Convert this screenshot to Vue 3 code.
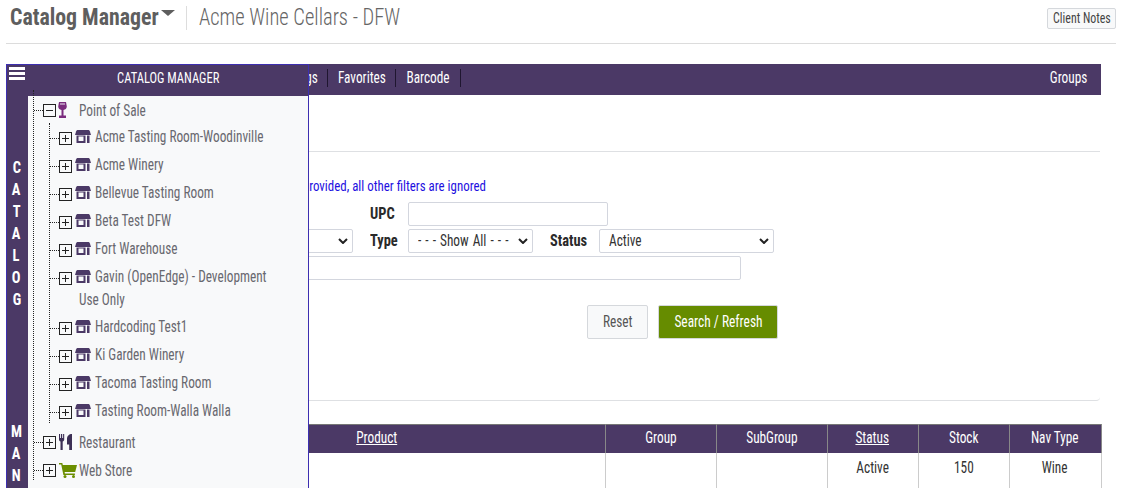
<script setup>
const stores = [
  { name: 'Acme Tasting Room-Woodinville' },
  { name: 'Acme Winery' },
  { name: 'Bellevue Tasting Room' },
  { name: 'Beta Test DFW' },
  { name: 'Fort Warehouse' },
  { name: 'Gavin (OpenEdge) - Development', more: 'Use Only' },
  { name: 'Hardcoding Test1' },
  { name: 'Ki Garden Winery' },
  { name: 'Tacoma Tasting Room' },
  { name: 'Tasting Room-Walla Walla' },
]
const rail = ['C', 'A', 'T', 'A', 'L', 'O', 'G', '', '', '', '', '', 'M', 'A', 'N']
</script>

<template>
  <div class="page">
    <header class="top">
      <div class="brand"><span class="n">Catalog Manager</span></div>
      <span class="caret"></span>
      <div class="client"><span class="n">Acme Wine Cellars - DFW</span></div>
      <button class="notes"><span class="n">Client Notes</span></button>
    </header>

    <nav class="nav">
      <div class="nav-left">
        <a><span class="n">Listings</span></a>
        <a><span class="n">Favorites</span></a>
        <a><span class="n">Barcode</span></a>
      </div>
      <a class="groups"><span class="n">Groups</span></a>
    </nav>

    <main class="content">
      <section class="filters">
        <p class="hint"><span class="n">If a UPC is provided, all other filters are ignored</span></p>
        <div class="form">
          <div class="f-row r1"><label><span class="n">UPC</span></label><input class="upc" /></div>
          <div class="f-row r2">
            <div class="select s0"><span class="n"></span><svg viewBox="0 0 10 6"><path d="M1 1l4 4 4-4" /></svg></div>
            <label><span class="n">Type</span></label>
            <div class="select s1"><span class="n spaced">- - - Show All - - -</span><svg viewBox="0 0 10 6"><path d="M1 1l4 4 4-4" /></svg></div>
            <label class="ls"><span class="n">Status</span></label>
            <div class="select s2"><span class="n">Active</span><svg viewBox="0 0 10 6"><path d="M1 1l4 4 4-4" /></svg></div>
          </div>
          <div class="f-row r3"><input class="wide" /></div>
        </div>
        <div class="actions">
          <button class="reset"><span class="n">Reset</span></button>
          <button class="search"><span class="n">Search / Refresh</span></button>
        </div>
      </section>

      <table class="grid">
        <colgroup>
          <col class="c0" /><col class="c1" /><col class="c2" /><col class="c2" /><col class="c3" /><col class="c3" /><col class="c4" />
        </colgroup>
        <thead>
          <tr>
            <th></th>
            <th><u class="n">Product</u></th>
            <th><span class="n">Group</span></th>
            <th><span class="n">SubGroup</span></th>
            <th><u class="n">Status</u></th>
            <th><span class="n">Stock</span></th>
            <th><span class="n">Nav Type</span></th>
          </tr>
        </thead>
        <tbody>
          <tr>
            <td></td><td></td><td></td><td></td>
            <td><span class="n">Active</span></td>
            <td><span class="n">150</span></td>
            <td><span class="n">Wine</span></td>
          </tr>
        </tbody>
      </table>
    </main>

    <aside class="side">
      <div class="rail">
        <span class="burger"><i></i><i></i><i></i></span>
        <div class="letters"><b v-for="(l, i) in rail" :key="i"><span class="n">{{ l }}</span></b></div>
      </div>
      <div class="panel">
        <div class="p-head"><span class="n">CATALOG MANAGER</span></div>
        <ul class="tree">
          <li class="root">
            <div class="line">
              <span class="box minus"></span>
              <svg class="ic wine" viewBox="0 0 9 16"><path fill="#7b2d7e" d="M1 0h7l.8 4.500c0 2-1.500 3.200-3.300 3.500v5.500h2.500V16H1v-2.500h2.500V8C1.700 7.700.2 6.500.2 4.500z" /><rect x="2" y="1" width="5" height="2" fill="#b48ab8" /></svg>
              <span class="txt"><span class="n">Point of Sale</span></span>
            </div>
            <ul class="sub">
              <li v-for="s in stores" :key="s.name" class="store">
                <div class="line">
                  <span class="box plus"></span>
                  <svg class="ic shop" viewBox="0 0 16 13"><path fill="#4b3966" d="M3 0h10c1 0 1.500.5 1.800 1.200L16 5H0l1.200-3.800C1.500.5 2 0 3 0z" /><path fill="#4b3966" fill-rule="evenodd" d="M1.500 5.500H10.500V13H1.500zM3.500 6.500v4.500h5V6.500z" /><rect x="12" y="5.500" width="2.500" height="7.500" fill="#4b3966" /></svg>
                  <span class="txt"><span class="n">{{ s.name }}</span></span>
                </div>
                <div v-if="s.more" class="more"><span class="txt"><span class="n">{{ s.more }}</span></span></div>
              </li>
            </ul>
          </li>
          <li class="root">
            <div class="line">
              <span class="box plus"></span>
              <svg class="ic fork" viewBox="0 0 13 16"><path fill="#3c2f55" d="M0 0h1.100v4h.9V0h1.200v4h.9V0h1.100v5.500c0 1-.7 1.700-1.500 2V16H1.500V7.500C.7 7.200 0 6.500 0 5.500zM13 0v16h-2.800v-5.500H8V5C8 2 10 0 13 0z" /></svg>
              <span class="txt"><span class="n">Restaurant</span></span>
            </div>
          </li>
          <li class="root">
            <div class="line">
              <span class="box plus"></span>
              <svg class="ic cart" viewBox="0 0 18 15"><path fill="#6b8e00" d="M0 0h3.300l.5 2H18l-1.800 7H5.600l.3 1.500h10V12H4.400L2.200 1.600H0z" /><circle cx="6" cy="13.500" r="1.500" fill="#6b8e00" /><circle cx="14.500" cy="13.500" r="1.500" fill="#6b8e00" /></svg>
              <span class="txt"><span class="n">Web Store</span></span>
            </div>
          </li>
        </ul>
      </div>
    </aside>
  </div>
</template>

<style>
html, body { margin: 0; height: 100%; overflow: hidden; background: #fff; }
</style>

<style scoped>
.page {
  position: relative;
  width: 1122px;
  height: 488px;
  overflow: hidden;
  box-sizing: border-box;
  padding: 0 6px;
  font-family: Roboto, "Liberation Sans", sans-serif;
  font-stretch: 75%;
  font-size: 16px;
  color: #3f3f46;
}
.n {
  display: inline-block;
  transform: scaleX(.83);
  white-space: nowrap;
}
.top {
  display: flex;
  align-items: flex-start;
  height: 43px;
  border-bottom: 1px solid #dcdcdc;
  padding-left: 4px;
}
.brand {
  width: 151px;
  font-size: 24px;
  font-weight: 700;
  color: #5e5e5e;
  line-height: 24px;
  margin-top: 5px;
}
.brand .n { transform: scaleX(.91); transform-origin: left center; }
.caret {
  width: 0; height: 0;
  border: 7px solid transparent;
  border-top: 6px solid #5e5e5e;
  border-bottom: 0;
  margin-top: 10px;
  flex: none;
}
.client {
  margin: 6px 0 0 11px;
  padding-left: 12px;
  border-left: 1px solid #ddd;
  height: 24px;
  font-size: 24px;
  line-height: 22px;
  color: #666;
  font-weight: 300;
}
.client .n { transform: scaleX(.855); transform-origin: left center; }
.notes {
  margin: 8px 0 0 auto;
  width: 69px;
  height: 21px;
  font: inherit;
  font-size: 14px;
  line-height: 17px;
  padding: 0;
  color: #444;
  background: #f8f9fa;
  border: 1px solid #d5d8dc;
  border-radius: 2px;
}
.notes .n { transform: scaleX(.85); }
.nav {
  margin-top: 20px;
  margin-right: 15px;
  height: 31px;
  background: #4b3966;
  color: #fff;
  display: flex;
  justify-content: space-between;
  align-items: center;
  line-height: 18px;
  padding-bottom: 3px;
  box-sizing: border-box;
}
.nav-left { display: flex; padding-left: 251px; }
.nav-left a {
  text-align: center;
  border-right: 1px solid #1f1630;
  height: 18px;
}
.nav-left a:nth-child(1) { width: 61px; padding-right: 9px; text-align: right; }
.nav-left a:nth-child(1) .n { transform-origin: right center; }
.nav-left a:nth-child(2) { width: 67px; }
.nav-left a:nth-child(3) { width: 64px; }
.groups { padding-right: 10px; }
.content { margin-right: 15px; }
.filters {
  margin-top: 56px;
  border-top: 1px solid #dee0e3;
  border-bottom: 1px solid #dee0e3;
  border-bottom-right-radius: 4px;
  height: 250px;
  margin-right: 1px;
  box-sizing: border-box;
}
.hint {
  margin: 0;
  width: 480px;
  text-align: right;
  color: #1d10e0;
  padding-top: 26px;
  line-height: 17px;
  font-size: 15px;
}
.hint .n { transform: scaleX(.86); transform-origin: right center; }
.form { margin-top: 7px; }
.f-row { display: flex; align-items: flex-start; height: 27px; }
label {
  font-weight: 700;
  color: #2a2a2a;
  line-height: 24px;
}
label .n { transform: scaleX(.9); transform-origin: left center; }
input, .select {
  box-sizing: border-box;
  height: 24px;
  border: 1px solid #d3d6de;
  border-radius: 2px;
  background: #fff;
  flex: none;
}
.select {
  display: flex;
  align-items: center;
  justify-content: space-between;
  padding: 0 4px 0 9px;
  color: #333;
}
.select .n { transform-origin: left center; margin-top: -2px; }
.select .n.spaced { word-spacing: 1.200px; width: 90px; }
.select svg {
  width: 10px;
  height: 6px;
  fill: none;
  stroke: #222;
  stroke-width: 2;
  flex: none;
}
.r1 { padding-left: 364px; }
.r1 label { width: 38px; }
.upc { width: 200px; }
.r2 { padding-left: 200px; }
.s0 { width: 147px; margin-right: 17px; }
.r2 label { width: 38px; }
.r2 label.ls { width: 49px; margin-left: 17px; }
.s1 { width: 125px; }
.s2 { width: 175px; }
.wide { margin-left: 200px; width: 535px; }
.actions { display: flex; gap: 10px; margin: 22px 0 0 581px; }
.actions button { font: inherit; height: 34px; border-radius: 2px; padding: 0 0 2px; }
.reset { width: 61px; background: #f8f9fa; border: 1px solid #d5d8dc; color: #555; }
.search { width: 120px; background: #668c00; border: 1px solid #d5d8dc; color: #fff; }
.search .n { transform: scaleX(.84); }
.grid {
  margin-top: 23px;
  width: 1095px;
  border-collapse: collapse;
  table-layout: fixed;
}
.c0 { width: 142px; }
.c1 { width: 457px; }
.c2 { width: 111px; }
.c3 { width: 91px; }
.c4 { width: 92px; }
.grid th {
  background: #4b3966;
  color: #fff;
  font-weight: 400;
  height: 28px;
  padding: 0 0 3px;
  box-sizing: border-box;
  border-top: 1px solid #777;
  border-right: 1px solid #888;
}
.grid td {
  height: 35px;
  padding: 0 0 6px;
  box-sizing: border-box;
  text-align: center;
  border-right: 1px solid #ccc;
  color: #333;
}
.side {
  position: absolute;
  left: 6px;
  top: 64px;
  width: 303px;
  height: 424px;
  box-sizing: border-box;
  border: 1px solid #3d2fb0;
  border-bottom: 0;
  display: flex;
  background: #f8f9fa;
  overflow: hidden;
}
.rail { width: 21px; background: #4b3966; color: #fff; flex: none; }
.burger { display: flex; flex-direction: column; gap: 2px; padding: 2px 3px 2px 2px; }
.burger i { height: 3px; background: #fff; display: block; }
.letters { display: flex; flex-direction: column; align-items: center; margin-top: 74px; padding-right: 2px; }
.letters b { height: 22px; line-height: 22px; font-size: 17px; font-weight: 700; }
.letters .n { transform: scaleX(.85); }
.panel { flex: 1; min-width: 0; position: relative; }
.p-head { height: 31px; background: #4b3966; color: #fff; text-align: center; line-height: 27px; font-size: 15px; }
.p-head .n { transform: scaleX(.835); }
ul { list-style: none; margin: 0; padding: 0; }
.tree { position: relative; }
.tree::before {
  content: '';
  position: absolute;
  left: 5px;
  top: -6px;
  bottom: 4px;
  border-left: 1px dotted #222;
}
.line { position: relative; display: flex; align-items: center; height: 28px; }
.root > .line { padding-left: 15px; }
.root > .line::before {
  content: '';
  position: absolute;
  left: 6px;
  top: 50%;
  width: 9px;
  border-top: 1px dotted #222;
}
.sub { position: relative; margin: -2px 0 4px; }
.sub::before {
  content: '';
  position: absolute;
  left: 21px;
  top: 1px;
  bottom: 1px;
  border-left: 1px dotted #222;
}
.store > .line { padding-left: 31px; }
.store > .line::before {
  content: '';
  position: absolute;
  left: 22px;
  top: calc(50% + 2px);
  width: 9px;
  border-top: 1px dotted #222;
}
.box {
  width: 13px;
  height: 13px;
  box-sizing: border-box;
  border: 1px solid #222;
  flex: none;
  position: relative;
  background: #f8f9fa;
}
.store .box { margin-top: 4px; }
.box::before {
  content: '';
  position: absolute;
  left: 2px;
  right: 2px;
  top: 5px;
  height: 1px;
  background: #222;
}
.plus::after {
  content: '';
  position: absolute;
  top: 2px;
  bottom: 2px;
  left: 5px;
  width: 1px;
  background: #222;
}
.ic { flex: none; display: block; }
.wine { width: 9px; height: 16px; margin: 0 12px 0 2px; }
.fork { width: 13px; height: 16px; margin: 0 7px 0 3px; }
.cart { width: 18px; height: 15px; margin: 0 2px 0 3px; }
.shop { width: 16px; height: 13px; margin: 0 4px 0 3px; }
.txt { color: #68686f; white-space: nowrap; line-height: 20px; margin-top: 2px; }
.txt .n { transform-origin: left center; }
.more { padding-left: 51px; height: 22px; line-height: 20px; }
</style>
